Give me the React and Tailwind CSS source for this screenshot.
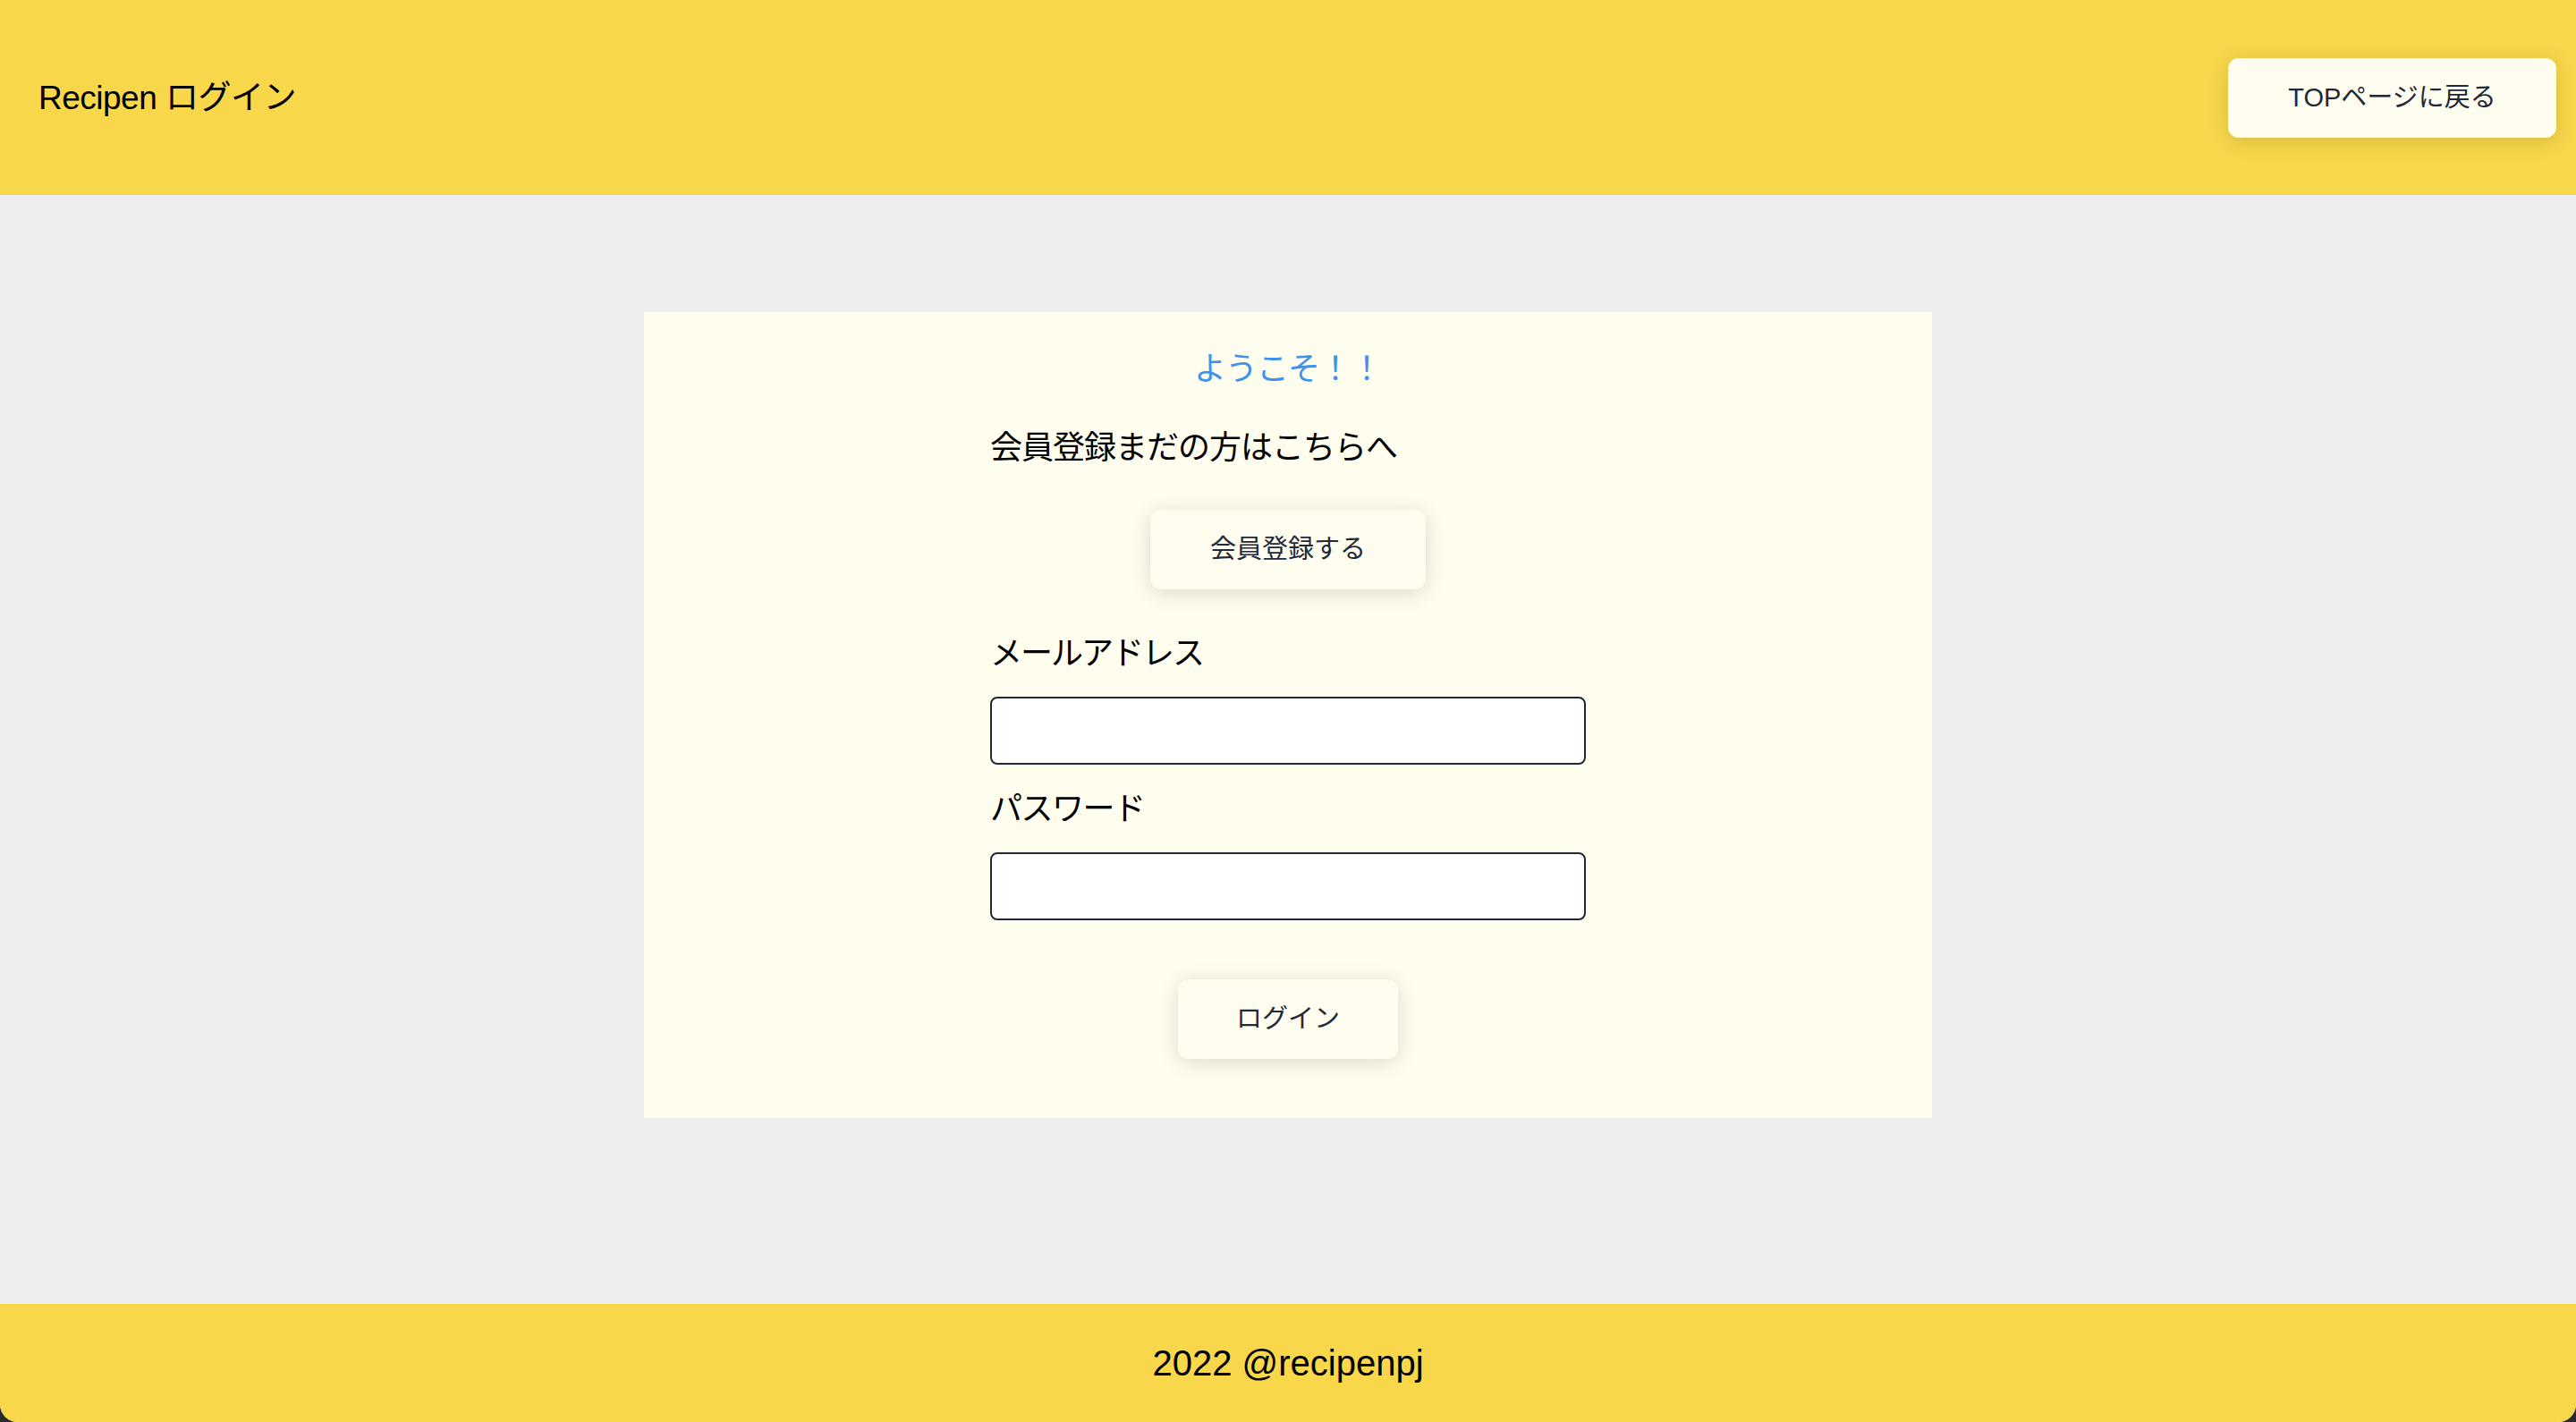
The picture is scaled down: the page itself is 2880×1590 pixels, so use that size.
import React from "react";

const jp = { fontFamily: '"Liberation Sans", "Noto Sans CJK JP", sans-serif' };

function Btn({ children, className = "" }) {
  return (
    <button
      type="button"
      className={
        "h-[89px] rounded-[12px] bg-[#fffdef] text-[#1f2937] text-[29px] leading-none whitespace-nowrap shadow-[0_4px_24px_rgba(0,0,0,0.14)] flex items-center justify-center " +
        className
      }
      style={jp}
    >
      {children}
    </button>
  );
}

export default function App() {
  return (
    <div className="w-[2880px] h-[1590px] bg-[#2a2a2a]" style={jp}>
      <div className="w-full h-full flex flex-col rounded-b-[20px] overflow-hidden bg-[#eeeeee]">
        <header className="h-[218px] shrink-0 bg-[#f8d74a] flex items-center justify-between pl-[43px] pr-[22px]">
          <h1 className="text-[37px] leading-none text-black font-normal tracking-[-0.5px]">Recipen ログイン</h1>
          <Btn className="w-[367px]">TOPページに戻る</Btn>
        </header>

        <main className="flex-1 flex flex-col items-center">
          <div className="mt-[131px] w-[1440px] h-[901px] bg-[#fffdee] flex flex-col items-center pt-[46px]">
            <p className="text-[36px] leading-[36px] text-[#4291ea] tracking-[-1px]">ようこそ！！</p>
            <div className="w-[666px] mt-[52px] flex flex-col">
              <p className="text-[36px] leading-[36px] text-black tracking-[-1px]">会員登録まだの方はこちらへ</p>
              <div className="mt-[51px] flex justify-center">
                <Btn className="w-[308px]">会員登録する</Btn>
              </div>
              <label className="mt-[54px] text-[36px] leading-[36px] text-black tracking-[-2px]">メールアドレス</label>
              <input
                type="email"
                className="mt-[30px] h-[76px] w-full rounded-[8px] border-2 border-[#1f2937] bg-white px-4 text-[28px] outline-none"
              />
              <label className="mt-[32px] text-[36px] leading-[36px] text-black tracking-[-1.5px]">パスワード</label>
              <input
                type="password"
                className="mt-[30px] h-[76px] w-full rounded-[8px] border-2 border-[#1f2937] bg-white px-4 text-[28px] outline-none"
              />
              <div className="mt-[66px] flex justify-center">
                <Btn className="w-[246px]">ログイン</Btn>
              </div>
            </div>
          </div>
        </main>

        <footer className="h-[132px] shrink-0 bg-[#f8d74a] flex items-center justify-center">
          <p className="text-[40px] leading-none text-black">2022 @recipenpj</p>
        </footer>
      </div>
    </div>
  );
}
